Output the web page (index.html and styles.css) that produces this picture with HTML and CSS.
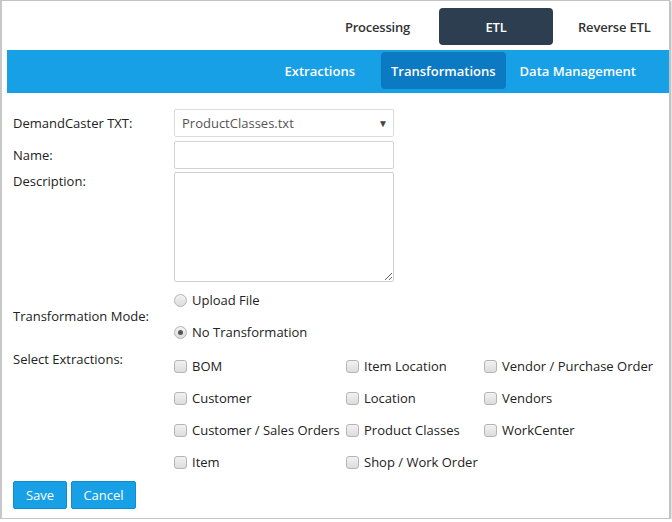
FILE: index.html
```html
<!DOCTYPE html>
<html>
<head>
<meta charset="utf-8">
<link rel="stylesheet" href="styles.css">
</head>
<body>
<div class="frame">
  <nav class="topnav">
    <a class="tab tab-processing">Processing</a>
    <a class="tab tab-etl active">ETL</a>
    <a class="tab tab-reverse">Reverse ETL</a>
  </nav>
  <nav class="subnav">
    <a class="sub sub-ext">Extractions</a>
    <a class="sub sub-trans active">Transformations</a>
    <a class="sub sub-data">Data Management</a>
  </nav>
  <form class="form">
    <div class="row row-select">
      <label class="lbl">DemandCaster TXT:</label>
      <div class="select"><span>ProductClasses.txt</span><span class="arrow">&#9660;</span></div>
    </div>
    <div class="row row-input">
      <label class="lbl">Name:</label>
      <input class="input" type="text">
    </div>
    <div class="row row-textarea">
      <label class="lbl">Description:</label>
      <textarea class="textarea"></textarea>
    </div>
    <div class="row row-radio">
      <label class="lbl lbl-mid">Transformation Mode:</label>
      <div class="radios">
        <label class="opt"><input type="radio" name="mode" class="radio"><span>Upload File</span></label>
        <label class="opt"><input type="radio" name="mode" class="radio" checked><span>No Transformation</span></label>
      </div>
    </div>
    <div class="row row-check">
      <label class="lbl">Select Extractions:</label>
      <div class="checks">
        <label class="opt"><input type="checkbox" class="check"><span>BOM</span></label>
        <label class="opt"><input type="checkbox" class="check"><span>Item Location</span></label>
        <label class="opt"><input type="checkbox" class="check"><span>Vendor / Purchase Order</span></label>
        <label class="opt"><input type="checkbox" class="check"><span>Customer</span></label>
        <label class="opt"><input type="checkbox" class="check"><span>Location</span></label>
        <label class="opt"><input type="checkbox" class="check"><span>Vendors</span></label>
        <label class="opt"><input type="checkbox" class="check"><span>Customer / Sales Orders</span></label>
        <label class="opt"><input type="checkbox" class="check"><span>Product Classes</span></label>
        <label class="opt"><input type="checkbox" class="check"><span>WorkCenter</span></label>
        <label class="opt"><input type="checkbox" class="check"><span>Item</span></label>
        <label class="opt"><input type="checkbox" class="check"><span>Shop / Work Order</span></label>
      </div>
    </div>
    <div class="buttons">
      <button type="button" class="btn btn-save">Save</button>
      <button type="button" class="btn btn-cancel">Cancel</button>
    </div>
  </form>
</div>
</body>
</html>
```
FILE: styles.css
```css
html, body {
  margin: 0;
  padding: 0;
  background: #ffffff;
}
body {
  font-family: "Open Sans", "Liberation Sans", sans-serif;
  font-size: 13px;
  color: #222;
}
.frame {
  box-sizing: border-box;
  width: 670px;
  height: 519px;
  border: 1px solid #c4c4c4;
  border-left: 2px solid #c8c8c8;
  box-shadow: 1px 1px 2px rgba(0,0,0,0.35);
  overflow: hidden;
  background: #fff;
}
.topnav {
  display: flex;
  justify-content: flex-end;
  height: 49px;
  padding: 7px 1px 0 0;
  box-sizing: border-box;
}
.tab {
  display: flex;
  align-items: center;
  justify-content: center;
  height: 37px;
  font-weight: 600;
  font-size: 13px;
  color: #333;
  letter-spacing: -0.2px;
}
.tab-processing { width: 123px; }
.tab-etl {
  width: 114px;
  background: #2c3e50;
  color: #fff;
  border-radius: 4px;
}
.tab-reverse {
  width: 115px;
  justify-content: flex-start;
  padding-left: 25px;
  box-sizing: border-box;
}
.subnav {
  display: flex;
  justify-content: flex-end;
  align-items: flex-start;
  margin-left: 5px;
  height: 43px;
  background: #18a0e6;
  padding: 2px 23px 0 0;
  box-sizing: border-box;
}
.sub {
  display: flex;
  align-items: center;
  height: 37px;
  padding: 0 10px;
  font-weight: 600;
  font-size: 13px;
  color: #fff;
  letter-spacing: 0;
}
.sub-ext { margin-right: 16px; }
.sub-trans {
  background: #0c79c3;
  border-radius: 4px;
}
.sub-data { margin-left: 4px; }
.form {
  padding: 16px 0 0 11px;
}
.row {
  display: flex;
  align-items: flex-start;
}
.lbl {
  width: 161px;
  flex: none;
  line-height: 18px;
  color: #222;
}
.row-select, .row-input { align-items: center; }
.row-input { margin-top: 4px; }
.row-textarea { margin-top: 3px; }
.select {
  box-sizing: border-box;
  width: 220px;
  height: 28px;
  border: 1px solid #dcdcdc;
  border-radius: 2px;
  display: flex;
  align-items: center;
  justify-content: space-between;
  padding: 0 5px 0 7px;
  color: #555;
}
.arrow {
  font-size: 10px;
  color: #444;
}
.input {
  box-sizing: border-box;
  width: 220px;
  height: 28px;
  border: 1px solid #d4d4d4;
  border-radius: 2px;
  margin: 0;
  padding: 0 6px;
  font: inherit;
}
.textarea {
  box-sizing: border-box;
  width: 220px;
  height: 110px;
  border: 1px solid #cfcfcf;
  border-radius: 2px;
  margin: 0;
  padding: 4px 6px;
  font: inherit;
  display: block;
}
.lbl-mid { align-self: center; }
.row-radio { margin-top: 2px; }
.radios {
  display: flex;
  flex-direction: column;
}
.opt {
  display: flex;
  align-items: center;
  height: 32px;
  white-space: nowrap;
  color: #222;
}
.radio, .check {
  -webkit-appearance: none;
  appearance: none;
  box-sizing: border-box;
  width: 13px;
  height: 13px;
  margin: 0 5px 0 0;
  border: 1px solid #b5b5b5;
  background: linear-gradient(#f2f2f2, #dcdcdc);
  flex: none;
}
.radio {
  border-radius: 50%;
  position: relative;
}
.radio:checked::after {
  content: "";
  position: absolute;
  left: 3px;
  top: 3px;
  width: 5px;
  height: 5px;
  border-radius: 50%;
  background: #555;
}
.check {
  border-radius: 3px;
}
.row-check { margin-top: 2px; }
.checks {
  display: grid;
  grid-template-columns: 172px 138px 180px;
}
.buttons {
  display: flex;
  gap: 4px;
  margin-top: 3px;
}
.btn {
  box-sizing: border-box;
  height: 28px;
  border: 1px solid #0f8dd0;
  border-radius: 2px;
  background: #18a0e6;
  color: #fff;
  font: inherit;
  font-size: 13px;
  padding: 0;
}
.btn-save { width: 54px; }
.btn-cancel { width: 65px; }
```
